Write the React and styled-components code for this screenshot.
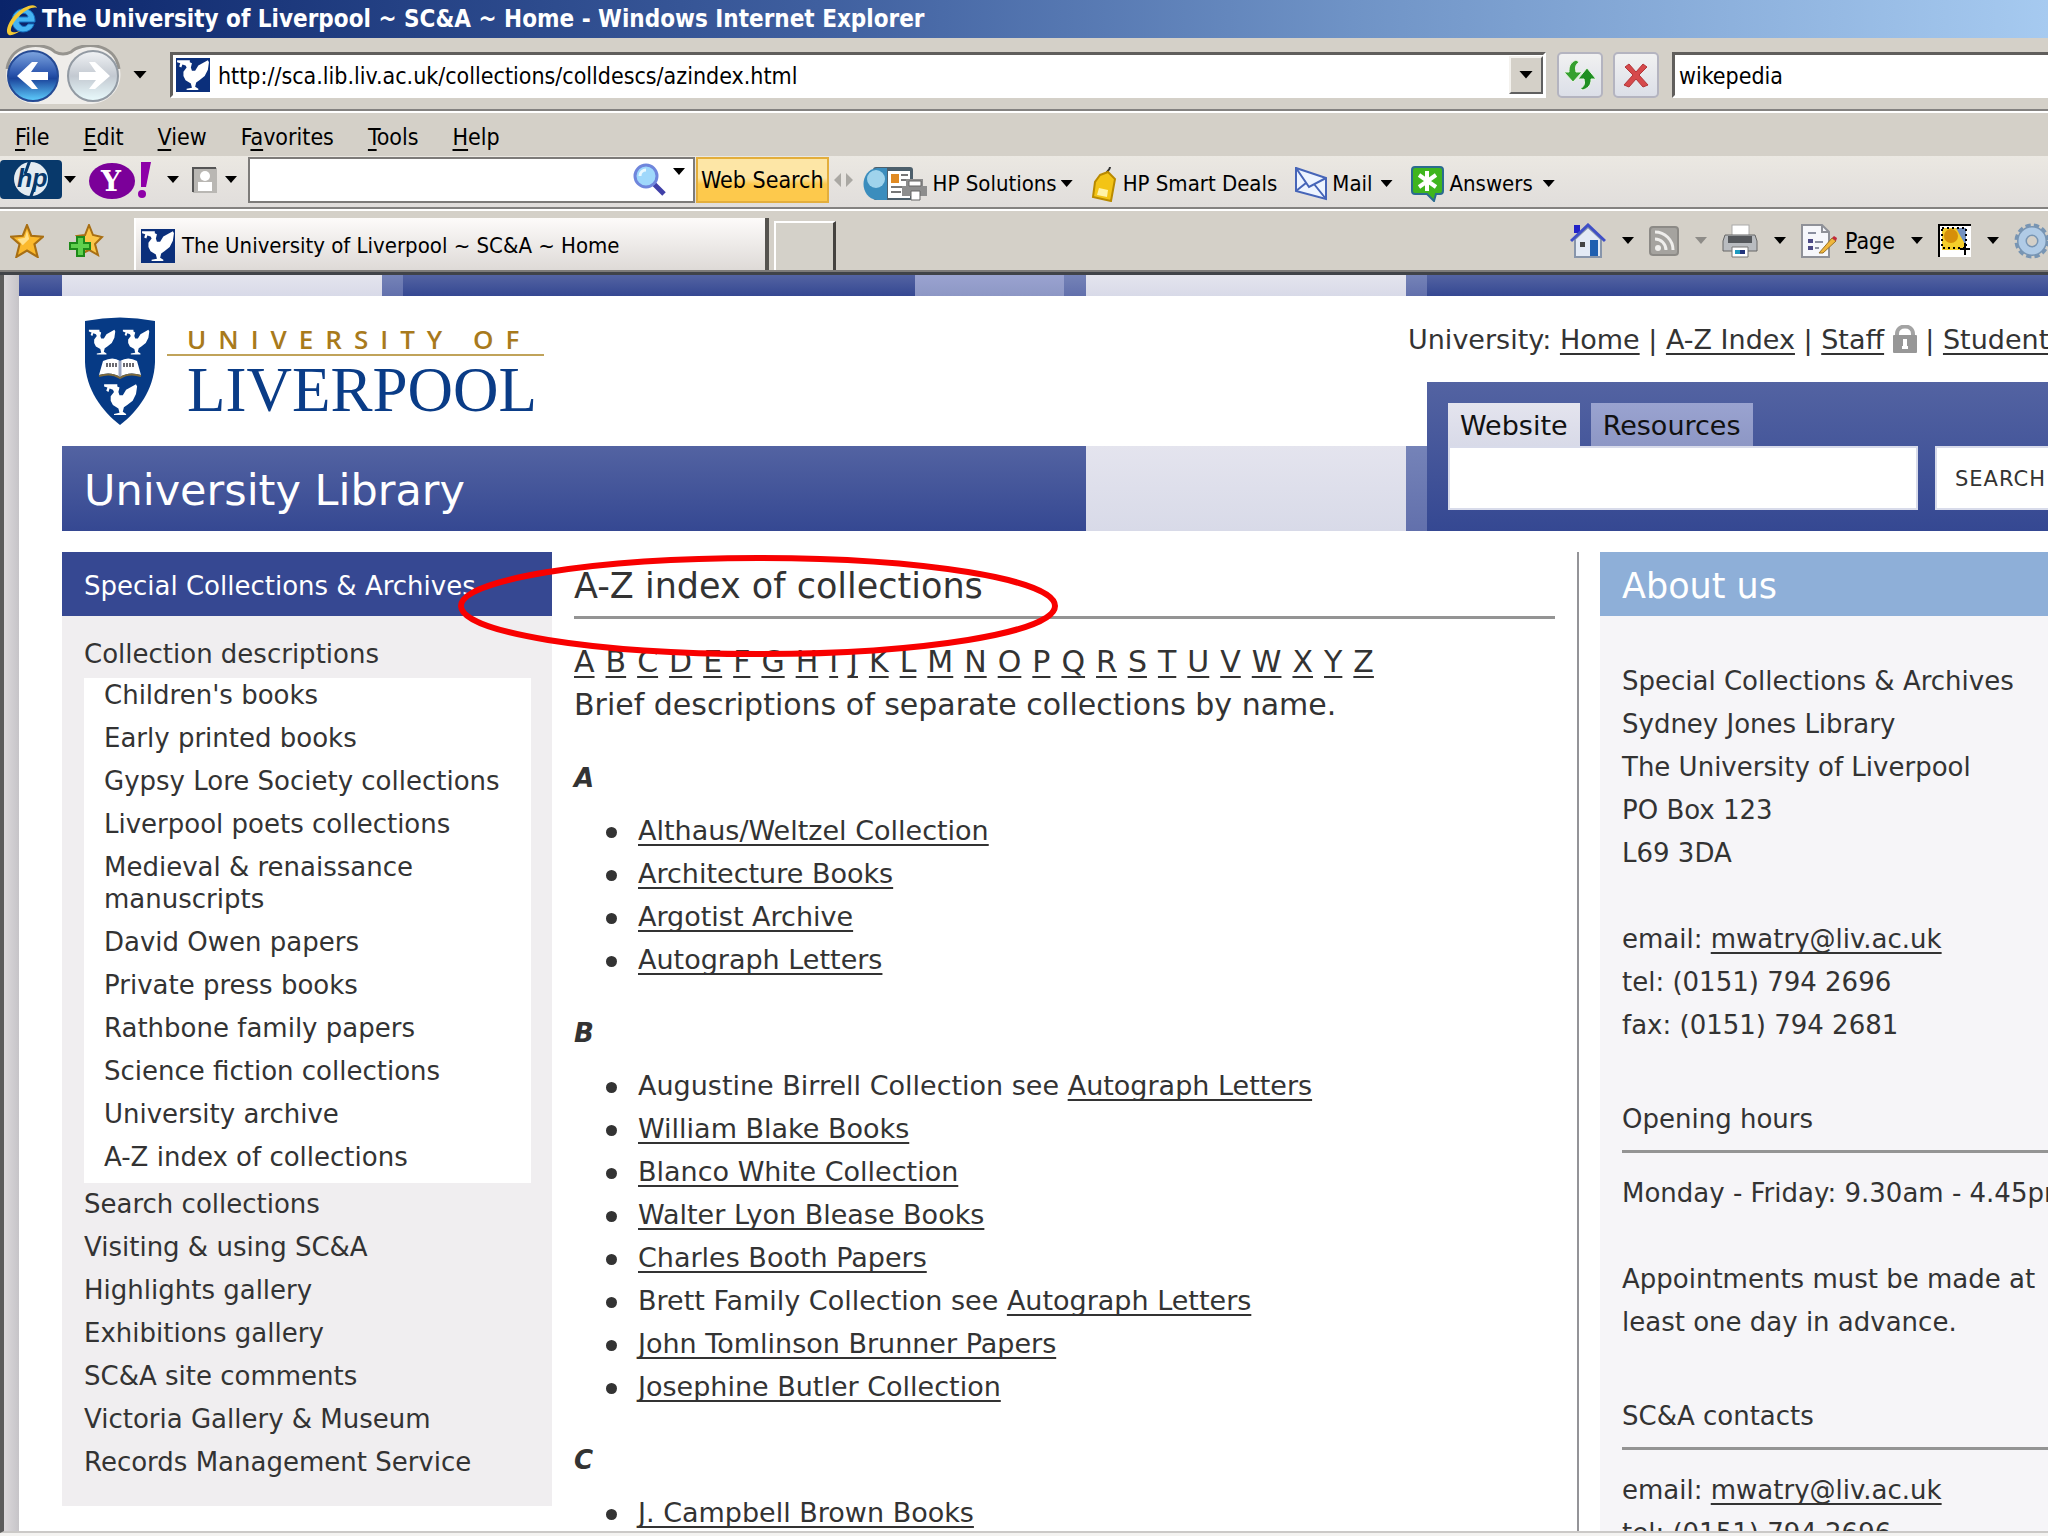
import { useState } from "react";
import styled, { createGlobalStyle } from "styled-components";

const LETTERS = "ABCDEFGHIJKLMNOPQRSTUVWXYZ".split("");

const MENUS = [
    ["", "F", "ile"],
    ["", "E", "dit"],
    ["", "V", "iew"],
    ["F", "a", "vorites"],
    ["", "T", "ools"],
    ["", "H", "elp"]
];

const DESCRIPTIONS = [
    "Children's books",
    "Early printed books",
    "Gypsy Lore Society collections",
    "Liverpool poets collections",
    "Medieval & renaissance manuscripts",
    "David Owen papers",
    "Private press books",
    "Rathbone family papers",
    "Science fiction collections",
    "University archive",
    "A-Z index of collections"
];

const SECTIONS = [
    "Search collections",
    "Visiting & using SC&A",
    "Highlights gallery",
    "Exhibitions gallery",
    "SC&A site comments",
    "Victoria Gallery & Museum",
    "Records Management Service"
];

const COLLECTIONS = [
    {
        letter: "A",
        items: [
            { link: "Althaus/Weltzel Collection" },
            { link: "Architecture Books" },
            { link: "Argotist Archive" },
            { link: "Autograph Letters" }
        ]
    },
    {
        letter: "B",
        items: [
            { before: "Augustine Birrell Collection see ", link: "Autograph Letters" },
            { link: "William Blake Books" },
            { link: "Blanco White Collection" },
            { link: "Walter Lyon Blease Books" },
            { link: "Charles Booth Papers" },
            { before: "Brett Family Collection see ", link: "Autograph Letters" },
            { link: "John Tomlinson Brunner Papers" },
            { link: "Josephine Butler Collection" }
        ]
    },
    {
        letter: "C",
        items: [{ link: "J. Campbell Brown Books" }]
    }
];

const BIRD = "M1 2H13V4L15 5L14 9L15 12H18L21 7L30 2L31 4L30 11L27 17L22 21L19 23L18 27L21 29V30H10V29L15 28L14 24L9 21L7 17V13L10 9L9 7L6 6L5 9L3 8L4 5L1 4Z";
const STAR = "M16 1L20 11L31 12L23 19L26 31L16 25L6 31L9 19L1 12L12 11Z";

export default function App() {
    return (
        <Browser>
            <GlobalStyle />
            <TitleBar>
                <ExplorerIcon />
                <h1>The University of Liverpool ~ SC&amp;A ~ Home - Windows Internet Explorer</h1>
            </TitleBar>
            <NavigationBar />
            <MenuBar>
                {MENUS.map(([before, key, after]) => (
                    <MenuButton key={key}>{before}<u>{key}</u>{after}</MenuButton>
                ))}
            </MenuBar>
            <SearchToolbar />
            <TabBar />
            <Viewport>
                <Site>
                    <TopStrip>
                        <Tint $tone="blue" />
                        <Tint $tone="light" />
                        <Tint $tone="mid" />
                        <Tint $tone="blue" />
                        <Tint $tone="soft" />
                        <Tint $tone="mid" />
                        <Tint $tone="light" />
                        <Tint $tone="mid" />
                        <Tint $tone="blue" />
                    </TopStrip>
                    <Masthead />
                    <Columns>
                        <Sidebar />
                        <Index />
                        <About />
                    </Columns>
                </Site>
            </Viewport>
        </Browser>
    );
}

function NavigationBar() {
    const [address, setAddress] = useState("http://sca.lib.liv.ac.uk/collections/colldescs/azindex.html");
    const [query, setQuery] = useState("wikepedia");

    return (
        <NavBar>
            <BackForward />
            <CaretButton aria-label="Recent pages"><Caret $size={14} /></CaretButton>
            <AddressBox>
                <Favicon />
                <input aria-label="Address" value={address} onChange={e => setAddress(e.target.value)} />
                <DropButton aria-label="Show addresses"><Caret $size={14} /></DropButton>
            </AddressBox>
            <SquareButton aria-label="Refresh">
                <svg width="34" height="34" viewBox="0 0 34 34">
                    <path d="M13 2C6 5 6 10 6 14H1L10 24L19 14H13C12 10 12 7 16 4Z" fill="#36a02f" stroke="#e8f5e4" />
                    <path d="M20 32C28 29 28 24 28 21H33L24 10L15 21H21C22 25 22 28 17 31Z" fill="#1f8f22" stroke="#e8f5e4" />
                </svg>
            </SquareButton>
            <SquareButton aria-label="Stop">
                <svg width="28" height="28" viewBox="0 0 28 28">
                    <path d="M3 6L7 3L14 11L21 3L25 6L17 14L26 24L21 26L14 18L7 26L2 24L11 14Z" fill="#d6494b" stroke="#b23538" />
                </svg>
            </SquareButton>
            <SearchBox aria-label="Search the web" value={query} onChange={e => setQuery(e.target.value)} />
        </NavBar>
    );
}

function SearchToolbar() {
    return (
        <ToolBar>
            <BrandButton aria-label="HP">
                <svg width="62" height="39" viewBox="0 0 62 39">
                    <rect width="62" height="39" rx="4" fill="#08396b" />
                    <circle cx="31" cy="19" r="17" fill="#e4ecf2" />
                    <text x="17" y="27" fontFamily="Liberation Sans" fontSize="25" fontStyle="italic" fontWeight="bold" fill="#08396b">hp</text>
                    <path d="M30 0L25 14M35 25L30 39" stroke="#08396b" strokeWidth="3" />
                </svg>
                <Caret $size={12} />
            </BrandButton>
            <BrandButton aria-label="Yahoo" $gap={16}>
                <svg width="62" height="38" viewBox="0 0 62 38">
                    <ellipse cx="23" cy="20" rx="23" ry="18" fill="#7b0099" />
                    <text x="12" y="30" fontFamily="DejaVu Serif" fontSize="28" fontWeight="bold" fill="#fff">Y</text>
                    <path d="M52 1H62L57 26H52Z" fill="#8e00a8" />
                    <circle cx="53" cy="33" r="4" fill="#8e00a8" />
                </svg>
                <Caret $size={12} />
            </BrandButton>
            <BrandButton aria-label="Account" $gap={8}>
                <svg width="25" height="26" viewBox="0 0 25 26">
                    <rect x="1" y="1" width="24" height="25" fill="#b9b7b3" />
                    <path d="M1 25V1H24" fill="none" stroke="#555" strokeWidth="2" />
                    <circle cx="13" cy="9" r="5" fill="#fff" />
                    <path d="M6 24V15H20V24Z" fill="#fff" />
                </svg>
                <Caret $size={12} />
            </BrandButton>
            <WebField>
                <input aria-label="Yahoo search" />
                <svg width="34" height="34" viewBox="0 0 34 34">
                    <path d="M20 20L31 31" stroke="#4040a8" strokeWidth="5" />
                    <circle cx="13" cy="13" r="11" fill="#9fd8fb" stroke="#6f86dc" strokeWidth="3" />
                    <path d="M7 13C7 9 10 7 13 7" fill="none" stroke="#e8f8ff" strokeWidth="3" />
                </svg>
                <CaretButton aria-label="Search history"><Caret $size={12} /></CaretButton>
            </WebField>
            <WebSearch>Web Search</WebSearch>
            <svg width="19" height="14" viewBox="0 0 19 14"><path d="M7 0V14L0 7ZM12 0V14L19 7Z" fill="#aaa8a3" /></svg>
            <Links>
                <LinkButton>
                    <svg width="64" height="36" viewBox="0 0 64 36">
                        <rect x="10" y="1" width="40" height="33" rx="3" fill="#4d5f6b" />
                        <path d="M24 2V34H14C-4 32 -4 4 14 2Z" fill="#3b8dbd" />
                        <ellipse cx="13" cy="13" rx="9" ry="9" fill="#9fd3ec" />
                        <rect x="25" y="5" width="22" height="27" fill="#fff" />
                        <rect x="28" y="8" width="8" height="9" fill="#e08a22" />
                        <path d="M38 9H45M38 14H45M28 21H40M28 26H38" stroke="#777" strokeWidth="2" />
                        <path d="M43 13H60V20H64V30H39V20H43Z" fill="#8d8d8d" />
                        <path d="M46 15H58V20H46ZM48 25H57V34H48Z" fill="#fff" stroke="#666" />
                    </svg>
                    HP Solutions<Caret $size={12} />
                </LinkButton>
                <LinkButton>
                    <svg width="26" height="36" viewBox="0 0 26 36">
                        <path d="M16 9C14 5 19 5 19 1" fill="none" stroke="#333" strokeWidth="2" />
                        <path d="M9 9L17 6L24 13L20 35L2 31L4 16Z" fill="#f3c416" stroke="#b98a00" strokeWidth="2" />
                        <path d="M8 22L17 24L16 31L6 29Z" fill="#fff3a8" />
                    </svg>
                    HP Smart Deals
                </LinkButton>
                <LinkButton $gap={10}>
                    <svg width="33" height="34" viewBox="0 0 33 34">
                        <path d="M1 1L31 11V32L1 24Z" fill="#edf4ff" stroke="#4665b8" strokeWidth="2" />
                        <path d="M1 1L14 20L31 11M1 24L11 16M31 32L19 17" fill="none" stroke="#4665b8" strokeWidth="2" />
                    </svg>
                    <span>Mail</span><Caret $size={12} />
                </LinkButton>
                <LinkButton $gap={12}>
                    <svg width="33" height="36" viewBox="0 0 33 36">
                        <path d="M4 1H29Q32 1 32 4V25Q32 28 29 28H25L23 35L16 28H4Q1 28 1 25V4Q1 1 4 1Z" fill="#3fb51e" stroke="#2b6b8f" strokeWidth="2" />
                        <path d="M16 5V25M8 9L25 21M25 9L8 21" stroke="#fff" strokeWidth="4" />
                    </svg>
                    <span>Answers</span><Caret $size={12} />
                </LinkButton>
            </Links>
        </ToolBar>
    );
}

function TabBar() {
    return (
        <Tabs>
            <IconButton aria-label="Favorites Center">
                <svg width="34" height="34" viewBox="0 0 32 32"><path d={STAR} fill="#fbb92c" stroke="#a86f14" strokeWidth="2" /><path d="M16 6L18 14L12 20L7 14L14 13Z" fill="#ffe08a" /></svg>
            </IconButton>
            <IconButton aria-label="Add to Favorites">
                <svg width="36" height="34" viewBox="0 0 36 34">
                    <path d="M21 1L25 11L34 13L27 20L30 31L21 26L13 30L15 18L9 12L17 11Z" fill="#fbc648" stroke="#a86f14" strokeWidth="2" />
                    <path d="M9 13H16V19H22V25H16V32H9V25H2V19H9Z" fill="#5fd04d" stroke="#1d8a1a" strokeWidth="2" />
                </svg>
            </IconButton>
            <Tab>
                <Favicon />
                The University of Liverpool ~ SC&amp;A ~ Home
            </Tab>
            <NewTab aria-label="New Tab" />
            <Commands>
                <Command aria-label="Home">
                    <svg width="36" height="36" viewBox="0 0 36 36">
                        <path d="M4 2H10V10H4Z" fill="#2222c8" />
                        <path d="M5 16L18 4L31 16V34H5Z" fill="#e3eaf5" stroke="#8795ab" strokeWidth="2" />
                        <path d="M1 18L18 2L35 18" fill="none" stroke="#3f4fc6" strokeWidth="3" />
                        <rect x="10" y="19" width="5" height="5" fill="#444" />
                        <rect x="20" y="17" width="8" height="16" fill="#1f5fb0" />
                    </svg>
                    <Caret $size={12} />
                </Command>
                <Command aria-label="Feeds" disabled>
                    <svg width="30" height="30" viewBox="0 0 30 30">
                        <rect x="1" y="1" width="28" height="28" rx="3" fill="#a5a39f" stroke="#8c8a86" strokeWidth="2" />
                        <circle cx="9" cy="22" r="3" fill="#efeeec" />
                        <path d="M6 13A11 11 0 0 1 17 24M6 6A18 18 0 0 1 24 24" fill="none" stroke="#efeeec" strokeWidth="3" />
                    </svg>
                    <Caret $size={12} $color="#8e8c88" />
                </Command>
                <Command aria-label="Print">
                    <svg width="36" height="34" viewBox="0 0 36 34">
                        <rect x="10" y="1" width="17" height="13" fill="#fff" stroke="#aaa" />
                        <path d="M3 11H33L35 17V27H1V17Z" fill="#b9bcc0" stroke="#666" />
                        <path d="M6 12H30V19H6Z" fill="#55585c" />
                        <path d="M10 23H26V33H10Z" fill="#fff" stroke="#777" />
                        <path d="M13 26H18V30H13Z" fill="#1c9ac0" /><path d="M18 26H23V30H18Z" fill="#23357c" />
                    </svg>
                    <Caret $size={12} />
                </Command>
                <Command>
                    <svg width="36" height="34" viewBox="0 0 36 34">
                        <path d="M1 1H21L28 8V33H1Z" fill="#f6f7fb" stroke="#8f9198" strokeWidth="2" />
                        <path d="M21 1V8H28" fill="none" stroke="#8f9198" strokeWidth="2" />
                        <path d="M7 9H15M14 18H22M14 24H18" stroke="#8a8fa0" strokeWidth="2" />
                        <path d="M7 15H12V19H7ZM7 22H12V26H7Z" fill="#4c4a86" />
                        <path d="M18 29L31 14L35 17L22 29Z" fill="#f0b63c" stroke="#9a7326" /><path d="M31 14L33 12L36 14L35 17Z" fill="#c2293a" />
                    </svg>
                    <span><u>P</u>age</span><Caret $size={12} />
                </Command>
                <Command aria-label="Research">
                    <svg width="33" height="33" viewBox="0 0 33 33">
                        <rect width="33" height="33" fill="#fff" />
                        <path d="M1 33V1H33" fill="none" stroke="#000" strokeWidth="2" />
                        <rect x="4" y="4" width="24" height="22" fill="#f4cd2a" />
                        <path d="M18 4H28V22Z" fill="#7391c0" />
                        <circle cx="13" cy="12" r="7" fill="#d68f0a" />
                        <path d="M4 4H28V24H4Z" fill="none" stroke="#000" strokeWidth="2" strokeDasharray="2 3" />
                        <path d="M27 19V31M22 25H32" stroke="#000" strokeWidth="2" />
                    </svg>
                    <Caret $size={12} />
                </Command>
                <IconButton aria-label="Tools">
                    <svg width="36" height="36" viewBox="0 0 36 36">
                        <circle cx="18" cy="18" r="15" fill="none" stroke="#7895b3" strokeWidth="5" strokeDasharray="5 3" />
                        <circle cx="18" cy="18" r="10" fill="none" stroke="#7895b3" strokeWidth="10" />
                        <circle cx="18" cy="18" r="10" fill="none" stroke="#b0cbe6" strokeWidth="7" />
                    </svg>
                </IconButton>
            </Commands>
        </Tabs>
    );
}

function Masthead() {
    const [tab, setTab] = useState("Website");

    return (
        <Header>
            <Branding>
                <Logo href="#home" aria-label="University of Liverpool">
                    <Shield />
                    <Wordmark>
                        <small>UNIVERSITY OF</small>
                        <strong>LIVERPOOL</strong>
                    </Wordmark>
                </Logo>
                <Band>
                    <LibraryTitle>University Library</LibraryTitle>
                    <Tint $tone="light" />
                </Band>
            </Branding>
            <Utilities>
                <UtilityLinks>
                    University: <a href="#home">Home</a> | <a href="#az">A-Z Index</a> | <a href="#staff">Staff</a> <Padlock /> | <a href="#students">Students</a>
                </UtilityLinks>
                <SearchRow>
                    <Tint $tone="mid" />
                    <SitePanel>
                        <SiteTabs>
                            {["Website", "Resources"].map(name => (
                                <SiteTab key={name} $active={name === tab} onClick={() => setTab(name)}>{name}</SiteTab>
                            ))}
                        </SiteTabs>
                        <SiteForm onSubmit={e => e.preventDefault()}>
                            <input aria-label="Search this site" />
                            <button>SEARCH</button>
                        </SiteForm>
                    </SitePanel>
                </SearchRow>
            </Utilities>
        </Header>
    );
}

function Sidebar() {
    return (
        <SideNav>
            <h2>Special Collections &amp; Archives</h2>
            <a href="#descriptions">Collection descriptions</a>
            <SubList>
                {DESCRIPTIONS.map(name => <li key={name}><a href="#collection">{name}</a></li>)}
            </SubList>
            {SECTIONS.map(name => <a key={name} href="#section">{name}</a>)}
        </SideNav>
    );
}

function Index() {
    return (
        <Article>
            <h2>A-Z index of collections</h2>
            <Highlight viewBox="0 0 602 103" aria-hidden="true">
                <ellipse cx="301" cy="51" rx="297" ry="48" fill="none" stroke="#f80000" strokeWidth="6" />
            </Highlight>
            <Alphabet>
                {LETTERS.map(letter => <a key={letter} href={`#${letter}`}>{letter}</a>)}
            </Alphabet>
            <Intro>Brief descriptions of separate collections by name.</Intro>
            {COLLECTIONS.map(({ letter, items }) => (
                <section key={letter}>
                    <h3>{letter}</h3>
                    <ul>
                        {items.map(({ before, link }) => (
                            <li key={`${before}${link}`}>{before}<a href="#item">{link}</a></li>
                        ))}
                    </ul>
                </section>
            ))}
        </Article>
    );
}

function About() {
    return (
        <Aside>
            <h2>About us</h2>
            <AboutBody>
                <p>Special Collections &amp; Archives<br />Sydney Jones Library<br />The University of Liverpool<br />PO Box 123<br />L69 3DA</p>
                <Contact />
                <h3>Opening hours</h3>
                <NoWrap>Monday - Friday: 9.30am - 4.45pm</NoWrap>
                <p>Appointments must be made at least one day in advance.</p>
                <h3>SC&amp;A contacts</h3>
                <Contact />
            </AboutBody>
        </Aside>
    );
}

function Contact() {
    return (
        <p>
            email: <a href="mailto:mwatry@liv.ac.uk">mwatry@liv.ac.uk</a><br />
            tel: (0151) 794 2696<br />
            fax: (0151) 794 2681
        </p>
    );
}

function ExplorerIcon() {
    return (
        <svg width="34" height="34" viewBox="0 0 34 34">
            <path d="M30 20H14C15 25 21 26 23 22H29C26 33 8 33 7 19C7 3 31 2 30 20ZM14 15H23C22 10 15 10 14 15Z" fill="#46b4f2" stroke="#1572c4" />
            <path d="M32 6C30 0 18 4 9 14C2 22 0 31 4 33C7 34 12 31 15 29C9 31 5 31 6 27C8 18 24 3 32 6Z" fill="#f2c733" />
        </svg>
    );
}

function Favicon() {
    return (
        <svg width="34" height="34" viewBox="0 0 32 32">
            <rect width="32" height="32" fill="#0b2f7b" />
            <path d={BIRD} fill="#fff" />
        </svg>
    );
}

function BackForward() {
    return (
        <svg width="116" height="60" viewBox="0 0 116 60">
            <defs>
                <linearGradient id="back" x2="0" y2="1">
                    <stop stopColor="#7fa6e0" /><stop offset=".45" stopColor="#2c56ae" /><stop offset=".55" stopColor="#1b449c" /><stop offset="1" stopColor="#5fd0ff" />
                </linearGradient>
                <linearGradient id="forward" x2="0" y2="1">
                    <stop stopColor="#f1f3f5" /><stop offset=".5" stopColor="#c3c9d1" /><stop offset="1" stopColor="#e9fbfd" />
                </linearGradient>
            </defs>
            <path d="M29 1C45 1 48 9 58 9C68 9 71 1 87 1C125 3 125 55 87 59H29C-8 55 -8 3 29 1Z" fill="#efedea" />
            <path d="M2 24C6 -4 40 -3 50 7Q58 11 66 7C76 -3 110 -4 114 24" fill="none" stroke="#96948f" strokeWidth="3" />
            <circle cx="28" cy="31" r="25" fill="url(#back)" stroke="#254a94" strokeWidth="2" />
            <circle cx="88" cy="31" r="25" fill="url(#forward)" stroke="#929aa3" strokeWidth="2" />
            <path d="M12 31L27 17H33L26 27H43V35H26L33 44H27Z" fill="#fff" />
            <path d="M105 31L90 17H84L91 27H74V35H91L84 44H90Z" fill="#fff" />
        </svg>
    );
}

function Shield() {
    return (
        <svg width="72" height="109" viewBox="0 0 72 109">
            <path d="M1 4Q36 -3 71 4V45C70 73 54 94 36 108C18 94 2 73 1 45Z" fill="#063a85" />
            <g fill="#fff">
                <path d={BIRD} transform="translate(4 11) scale(.88)" />
                <path d={BIRD} transform="translate(38 11) scale(.88)" />
                <path d={BIRD} transform="translate(19 65) scale(1.1)" />
                <path d="M19 44Q29 39 36 44Q44 39 53 44L57 58Q45 54 36 60Q27 54 15 58Z" />
            </g>
            <path d="M36 44V60" stroke="#9aa6c4" strokeWidth="3" />
            <path d="M22 48H33M39 48H51" stroke="#6b6a70" strokeWidth="4" strokeDasharray="2 1" />
            <path d="M15 59Q27 55 36 61Q45 55 57 59" fill="none" stroke="#7d6a3c" strokeWidth="2" />
        </svg>
    );
}

function Padlock() {
    return (
        <svg width="24" height="28" viewBox="0 0 24 28">
            <path d="M4 12V9C4 -1 20 -1 20 9V12" fill="none" stroke="#a3a3a3" strokeWidth="4" />
            <rect y="10" width="24" height="18" rx="1" fill="#979797" />
            <path d="M10 14H14V21H15V24H9V21H10Z" fill="#fff" />
        </svg>
    );
}

const GlobalStyle = createGlobalStyle`
    * {
        box-sizing: border-box;
        margin: 0;
        padding: 0;
    }

    body {
        font-family: "DejaVu Sans", Verdana, sans-serif;
        font-size: 26px;
        color: #333;
    }

    button, input {
        font: inherit;
        color: inherit;
        border: none;
        background: none;
    }

    a {
        color: inherit;
        text-decoration-thickness: 2px;
        text-underline-offset: 4px;
        text-decoration-skip-ink: none;
    }

    ul {
        list-style: none;
    }

    svg {
        flex-shrink: 0;
    }
`;

const TONES = {
    blue: "linear-gradient(#5363a2, #354892)",
    light: "linear-gradient(#e4e4ee, #d8dae8)",
    mid: "linear-gradient(#7583b8, #6270ac)",
    soft: "linear-gradient(#9aa3d0, #8d97c5)"
};

const Tint = styled.div`
    background: ${({ $tone }) => TONES[$tone]};
`;

const Caret = styled.i`
    flex-shrink: 0;
    width: ${({ $size }) => $size}px;
    height: ${({ $size }) => $size / 2 + 1}px;
    background: ${({ $color }) => $color || "#000"};
    clip-path: polygon(0 0, 100% 0, 50% 100%);
`;

const Browser = styled.div`
    height: 100vh;
    display: flex;
    flex-direction: column;
    overflow: hidden;
    background: #d4d0c8;
    border-bottom: 3px solid #f4f3f1;
`;

const Bar = styled.div`
    flex-shrink: 0;
    display: flex;
    align-items: center;
    font-family: "DejaVu Sans Condensed", Tahoma, sans-serif;
    font-size: 23px;
    color: #000;
`;

const TitleBar = styled(Bar)`
    height: 38px;
    padding-left: 5px;
    gap: 3px;
    background: linear-gradient(90deg, #0a246a, #3f5f9f 40%, #6f93c6 66%, #a6caf0);

    h1 {
        font-size: 24px;
        color: #fff;
    }
`;

const NavBar = styled(Bar)`
    height: 75px;
    padding-left: 5px;
    border-bottom: 2px solid #fff;
    box-shadow: inset 0 -2px #848280;
`;

const CaretButton = styled.button`
    display: flex;
    align-items: center;
    padding: 12px;
`;

const AddressBox = styled.div`
    flex: 1;
    display: flex;
    align-items: center;
    height: 46px;
    margin: 0 11px;
    padding-left: 3px;
    background: #fff;
    border: 3px solid;
    border-color: #605e5c #fff #fff #605e5c;

    input {
        flex: 1;
        padding: 2px 8px 0;
    }
`;

const DropButton = styled.button`
    width: 34px;
    height: 38px;
    display: flex;
    align-items: center;
    justify-content: center;
    background: #d4d0c8;
    border: 2px solid;
    border-color: #f4f2ee #606060 #606060 #f4f2ee;
`;

const SquareButton = styled.button`
    width: 46px;
    height: 46px;
    display: flex;
    align-items: center;
    justify-content: center;
    margin-right: 10px;
    background: linear-gradient(#f1f1f1, #dcdfe8);
    border: 2px solid #b4b4c0;
    border-radius: 5px;
`;

const SearchBox = styled.input`
    width: 376px;
    height: 46px;
    margin-left: 3px;
    padding: 2px 0 0 4px;
    background: #fff;
    border: 3px solid;
    border-color: #605e5c #fff #fff #605e5c;
    border-right: none;
`;

const MenuBar = styled(Bar)`
    height: 43px;
    gap: 34px;
    padding: 4px 15px 0;
`;

const MenuButton = styled.button`
    u {
        text-decoration-thickness: 2px;
        text-underline-offset: 4px;
    }
`;

const ToolBar = styled(Bar)`
    height: 55px;
    padding-bottom: 6px;
    background: linear-gradient(#ebe8e2, #e0dddb);
    border-bottom: 2px solid #fff;
    box-shadow: inset 0 -2px #848280;
`;

const BrandButton = styled.button`
    display: flex;
    align-items: center;
    gap: ${({ $gap }) => $gap || 2}px;
    margin-right: 13px;
`;

const WebField = styled.div`
    width: 447px;
    height: 46px;
    margin-left: -2px;
    display: flex;
    align-items: center;
    background: #fff;
    border: 2px solid #7d7b79;

    input {
        flex: 1;
    }

    button {
        padding: 0 8px 16px 6px;
    }
`;

const WebSearch = styled.button`
    height: 46px;
    margin: 0 5px 0 1px;
    padding: 0 3px;
    background: linear-gradient(#fde6a6 45%, #fdc94c 60%);
    border: 2px solid #e3ae3c;
`;

const Links = styled.div`
    align-self: stretch;
    display: flex;
    align-items: center;
    gap: 10px;
    padding-left: 10px;
    padding-top: 8px;
    font-size: 22px;
`;

const LinkButton = styled.button`
    display: flex;
    align-items: center;
    gap: ${({ $gap }) => $gap || 6}px;
    margin-right: 8px;

    svg + span {
        margin-left: -6px;
    }

    ${Caret} {
        margin-left: -2px;
    }
`;

const Tabs = styled(Bar)`
    height: 64px;
    padding: 0 0 2px 10px;
    border-bottom: 3px solid #404348;
    box-shadow: inset 0 -2px #7d7b79;
`;

const IconButton = styled.button`
    display: flex;
    margin-right: 24px;
`;

const Tab = styled.button`
    align-self: flex-end;
    display: flex;
    align-items: center;
    gap: 7px;
    width: 635px;
    height: 52px;
    margin-left: 6px;
    padding: 3px 0 0 5px;
    font-size: 22px;
    background: linear-gradient(#fdfbfa, #dedad7);
    border-left: 2px solid #fff;
    border-right: 4px solid #55534f;
    white-space: nowrap;
`;

const NewTab = styled.button`
    align-self: flex-end;
    width: 62px;
    height: 49px;
    margin-left: 5px;
    background: #d4d1c9;
    border: solid;
    border-width: 2px 3px 0 2px;
    border-color: #fff #44423f #fff #fff;
`;

const Commands = styled.div`
    display: flex;
    align-items: center;
    gap: 15px;
    margin: 0 -26px 0 auto;
`;

const Command = styled.button`
    display: flex;
    align-items: center;
    gap: 16px;

    svg + span {
        margin-left: -8px;
    }
`;

const Viewport = styled.main`
    flex: 1;
    min-height: 0;
    overflow: hidden;
    border-left: 4px solid #5c5c5c;
    padding-left: 15px;
    background: linear-gradient(90deg, #dcd9dc, #c6c4c8 15px, #fff 15px);
    border-bottom: 2px solid #cbc9c7;
`;

/* runs past the right edge of the window, like the scrolled page it holds */
const Site = styled.div`
    margin-right: -42px;
    background: #fff;
`;

const TopStrip = styled.div`
    height: 21px;
    display: grid;
    grid-template-columns: 43px 320px 21px 512px 149px 22px 320px 21px 1fr;
`;

const Header = styled.header`
    height: 235px;
    display: flex;
    padding-left: 43px;
`;

const Branding = styled.div`
    flex: 1;
    display: flex;
    flex-direction: column;
`;

const Logo = styled.a`
    flex: 1;
    display: flex;
    gap: 11px;
    padding: 21px 22px 0;
    text-decoration: none;
`;

const Wordmark = styled.span`
    width: 377px;
    padding-top: 7px;
    display: flex;
    flex-direction: column;
    color: #0a3c87;

    small {
        padding-left: 20px;
        font-family: "Open Sans", sans-serif;
        font-size: 26px;
        line-height: 30px;
        font-weight: 600;
        letter-spacing: 12px;
        color: #a87a1c;
        border-bottom: 2px solid #c0a35a;
        white-space: nowrap;
    }

    strong {
        padding-left: 20px;
        font-family: "Liberation Serif", serif;
        font-size: 63px;
        line-height: 68px;
        font-weight: normal;
    }
`;

const Band = styled.div`
    height: 85px;
    display: grid;
    grid-template-columns: 1fr 320px;
`;

const LibraryTitle = styled.h2`
    padding: 4px 0 0 22px;
    font-size: 43px;
    font-weight: normal;
    line-height: 81px;
    color: #fff;
    background: ${TONES.blue};
`;

const Utilities = styled.div`
    width: 684px;
    display: flex;
    flex-direction: column;
`;

const UtilityLinks = styled.nav`
    height: 86px;
    padding: 22px 0 0 2px;
    font-size: 27px;
    line-height: 43px;
    white-space: nowrap;

    svg {
        vertical-align: -4px;
    }
`;

const SearchRow = styled.div`
    flex: 1;
    display: flex;
    align-items: flex-end;

    > ${Tint} {
        width: 21px;
        height: 85px;
    }
`;

const SitePanel = styled.div`
    flex: 1;
    height: 149px;
    padding: 21px 0 0 21px;
    background: ${TONES.blue};
`;

const SiteTabs = styled.div`
    display: flex;
    gap: 11px;
`;

const SiteTab = styled.button`
    height: 43px;
    padding: 2px 12px 0;
    font-size: 27px;
    color: #111;
    background: ${({ $active }) => TONES[$active ? "light" : "soft"]};
`;

const SiteForm = styled.form`
    display: flex;
    gap: 17px;

    input, button {
        height: 64px;
        background: #fff;
        border: 2px solid #d8dbea;
    }

    input {
        width: 470px;
    }

    button {
        padding: 2px 18px 0;
        font-size: 21px;
        letter-spacing: 1px;
    }
`;

const Columns = styled.div`
    display: flex;
    align-items: flex-start;
    padding: 21px 0 0 43px;

    h2, h3 {
        font-weight: normal;
    }

    h2 {
        padding-top: 4px;
        line-height: 60px;
    }
`;

const SideNav = styled.nav`
    width: 490px;
    padding-bottom: 22px;
    background: #f0eef0;

    h2 {
        margin-bottom: 17px;
        padding-left: 22px;
        font-size: 26px;
        color: #fff;
        background: #364892;
    }

    a {
        display: block;
        padding: 0 22px;
        line-height: 43px;
        text-decoration: none;
    }
`;

const SubList = styled.ul`
    margin: 2px 21px 0 22px;
    background: #fff;

    a {
        padding: 1px 0 10px 20px;
        line-height: 32px;
    }
`;

const Article = styled.article`
    position: relative;
    flex: 1;
    margin-left: 22px;
    padding-right: 22px;

    h2 {
        font-size: 35px;
        border-bottom: 3px solid #949494;
    }

    h3 {
        margin: 31px 0 9px;
        font-size: 26px;
        font-weight: bold;
        font-style: italic;
        line-height: 43px;
    }

    ul {
        padding-left: 32px;
    }

    li {
        font-size: 27px;
        line-height: 43px;
    }

    li::before {
        content: "";
        display: inline-block;
        width: 11px;
        height: 11px;
        margin-right: 21px;
        border-radius: 50%;
        background: #333;
        vertical-align: 2px;
    }
`;

const Highlight = styled.svg`
    position: absolute;
    top: 3px;
    left: -117px;
    width: 602px;
`;

const Alphabet = styled.nav`
    display: flex;
    gap: 11px;
    margin-top: 21px;
    font-size: 30px;
    line-height: 43px;
`;

const Intro = styled.p`
    font-size: 30px;
    line-height: 43px;
`;

const Aside = styled.aside`
    width: 513px;
    padding-left: 21px;
    border-left: 2px solid #949498;

    h2 {
        padding-left: 22px;
        font-size: 35px;
        color: #fff;
        background: #8eafd8;
    }
`;

const AboutBody = styled.div`
    padding: 44px 22px;
    line-height: 43px;
    background: #f6f5f8;

    p + p {
        margin-top: 43px;
    }

    h3 {
        margin: 51px 0 19px;
        padding-bottom: 9px;
        font-size: 26px;
        border-bottom: 3px solid #949494;
    }
`;

const NoWrap = styled.p`
    white-space: nowrap;
`;
